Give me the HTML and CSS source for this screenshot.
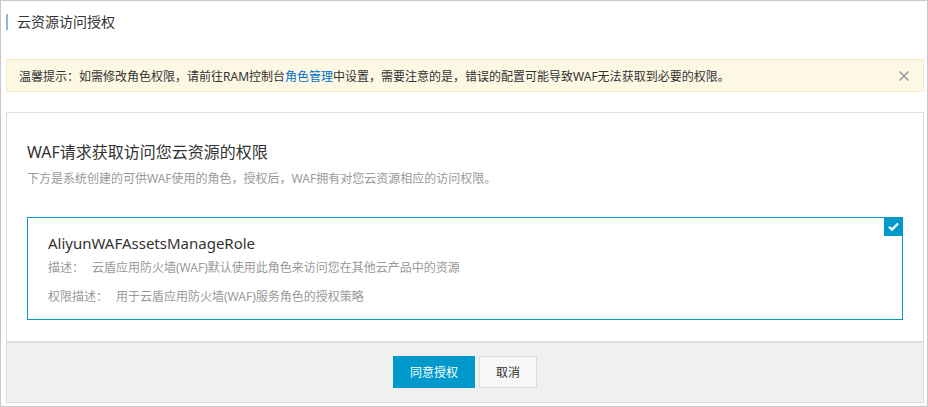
FILE: index.html
```html
<!DOCTYPE html>
<html lang="zh-CN">
<head>
<meta charset="utf-8">
<title>云资源访问授权</title>
<link rel="stylesheet" href="styles.css">
</head>
<body>
<div class="page">
  <div class="header">
    <span class="title-bar"></span>
    <span class="title">云资源访问授权</span>
  </div>
  <div class="notice">
    <span class="notice-text">温馨提示：如需修改角色权限，请前往RAM控制台<a class="link" href="#">角色管理</a>中设置，需要注意的是，错误的配置可能导致WAF无法获取到必要的权限。</span>
    <svg class="close" width="12" height="12" viewBox="0 0 12 12"><path d="M1.5 1.5 L10.5 10.5 M10.5 1.5 L1.5 10.5" stroke="#999" stroke-width="1.6" fill="none"/></svg>
  </div>
  <div class="card">
    <div class="card-body">
      <h2 class="heading">WAF请求获取访问您云资源的权限</h2>
      <p class="sub">下方是系统创建的可供WAF使用的角色，授权后，WAF拥有对您云资源相应的访问权限。</p>
      <div class="role">
        <div class="role-name">AliyunWAFAssetsManageRole</div>
        <div class="role-line"><span class="label">描述：</span>云盾应用防火墙(WAF)默认使用此角色来访问您在其他云产品中的资源</div>
        <div class="role-line"><span class="label">权限描述：</span>用于云盾应用防火墙(WAF)服务角色的授权策略</div>
        <span class="check"><svg width="19" height="19" viewBox="0 0 19 19"><path d="M5 9.8 L8 12.6 L14 6.4" stroke="#fff" stroke-width="2.2" fill="none"/></svg></span>
      </div>
    </div>
    <div class="footer">
      <button class="btn btn-primary">同意授权</button>
      <button class="btn btn-default">取消</button>
    </div>
  </div>
</div>
</body>
</html>
```

FILE: styles.css
```css
* { box-sizing: border-box; }
html, body { margin: 0; padding: 0; background: #fff; }
body {
  font-family: "Noto Sans", "Noto Sans CJK SC", sans-serif;
  color: #333;
}
.page {
  width: 928px;
  height: 407px;
  border: 1px solid #c8c8c8;
  padding: 0 0 0 5px;
  overflow: hidden;
}
.header {
  height: 58px;
  display: flex;
  align-items: center;
  padding-top: 0;
  padding-bottom: 16px;
}
.title-bar {
  width: 2px;
  height: 16px;
  background: #88b7e0;
  margin-right: 9px;
}
.title {
  font-size: 14px;
  line-height: 16px;
  color: #333;
}
.notice {
  width: 918px;
  height: 33px;
  background: #fdf8e4;
  border: 1px solid #f5e9c6;
  display: flex;
  align-items: center;
  justify-content: space-between;
  padding: 0 13px 0 12px;
}
.notice-text {
  font-size: 12px;
  color: #333;
}
.link { color: #0070cc; text-decoration: none; }
.close { display: block; }
.card {
  margin-top: 20px;
  width: 918px;
  height: 291px;
  border: 1px solid #ddd;
  display: flex;
  flex-direction: column;
}
.card-body {
  padding: 28px 20px 20px 20px;
  flex: 1;
}
.heading {
  margin: 0;
  font-weight: normal;
  font-size: 16px;
  line-height: 22px;
  color: #333;
}
.sub {
  margin: 8px 0 0 0;
  font-size: 12px;
  line-height: 16px;
  color: #999;
}
.role {
  position: relative;
  margin-top: 30px;
  height: 103px;
  border: 1px solid #0a9acb;
  padding: 13px 20px 0 20px;
}
.role-name {
  font-size: 15px;
  line-height: 24px;
  color: #333;
}
.role-line {
  font-size: 12px;
  line-height: 16px;
  color: #999;
  margin-top: 5px;
}
.role-line + .role-line { margin-top: 13px; }
.label { margin-right: 8px; }
.check {
  position: absolute;
  top: -1px;
  right: -1px;
  width: 19px;
  height: 19px;
  background: #0099cc;
  display: block;
}
.check svg { display: block; }
.footer {
  height: 61px;
  border-top: 2px solid #ddd;
  background: #f0f0f0;
  display: flex;
  justify-content: center;
  align-items: center;
  gap: 4px;
  padding-bottom: 1px;
}
.btn {
  height: 32px;
  font-family: "Noto Sans", "Noto Sans CJK SC", sans-serif;
  font-size: 12px;
  border-radius: 0;
  cursor: pointer;
  padding: 0;
}
.btn-primary {
  width: 82px;
  background: #0099cc;
  border: 1px solid #0099cc;
  color: #fff;
}
.btn-default {
  width: 58px;
  background: #f7f7f7;
  border: 1px solid #ddd;
  color: #333;
}
```
